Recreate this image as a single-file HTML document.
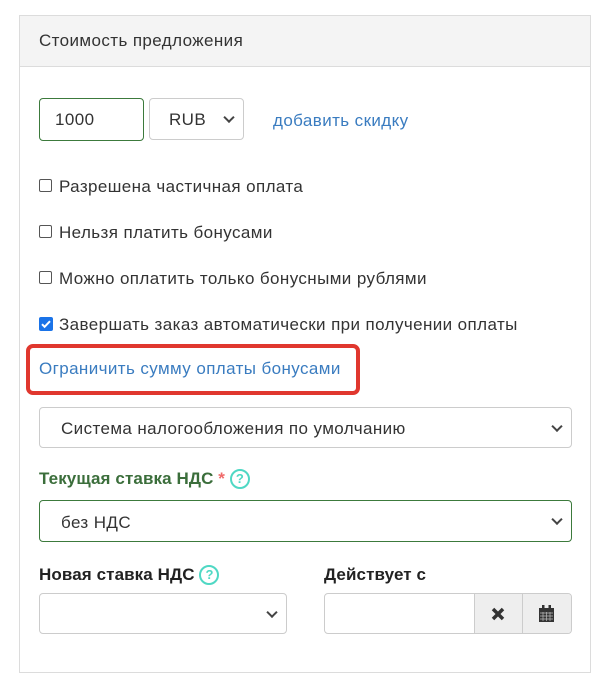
<!DOCTYPE html>
<html><head><meta charset="utf-8"><style>
*{box-sizing:border-box;margin:0;padding:0}
body{width:610px;height:687px;background:#fff;font-family:"Liberation Sans","DejaVu Sans",sans-serif;color:#333;position:relative;overflow:hidden}
.a{position:absolute}
.panel{left:19px;top:15px;width:572px;height:658px;border:1px solid #dcdcdc}
.head{left:20px;top:16px;width:570px;height:51px;background:#f4f4f4;border-bottom:1px solid #dcdcdc}
.t{font-size:17px;letter-spacing:0.4px;white-space:nowrap}
.b{font-size:17px;letter-spacing:0.1px;font-weight:bold}
.box{border:1px solid #ccc;border-radius:4px;background:#fff}
.chev{position:absolute;right:10px;top:50%;width:8px;height:8px;border-right:2px solid #444;border-bottom:2px solid #444;transform:translateY(-70%) rotate(45deg)}
.cb{width:13px;height:13px;border:1px solid #555;border-radius:2px;background:#fff}
.q{display:inline-block;width:20px;height:20px;border:2px solid #4fd8c4;border-radius:50%;color:#4fd8c4;font-size:13px;font-weight:bold;text-align:center;line-height:16px;vertical-align:1px;letter-spacing:0}
.link{color:#3a7cc0}
</style></head><body>
<div class="a panel"></div>
<div class="a head"></div>
<div class="a t" style="left:39px;top:31px">Стоимость предложения</div>

<div class="a box" style="left:39px;top:98px;width:105px;height:43px;border-color:#3c7a3c"></div>
<div class="a t" style="left:55px;top:110px">1000</div>
<div class="a box" style="left:149px;top:98px;width:95px;height:42px"><span class="a t" style="left:19px;top:11px">RUB</span><div class="chev"></div></div>
<div class="a t link" style="left:273px;top:111px">добавить скидку</div>

<div class="a cb" style="left:39px;top:179px"></div><div class="a t" style="left:59px;top:177px">Разрешена частичная оплата</div>
<div class="a cb" style="left:39px;top:225px"></div><div class="a t" style="left:59px;top:223px">Нельзя платить бонусами</div>
<div class="a cb" style="left:39px;top:271px"></div><div class="a t" style="left:59px;top:269px">Можно оплатить только бонусными рублями</div>
<div class="a" style="left:39px;top:317px;width:14px;height:14px;background:#1a73e8;border-radius:2px"><svg width="14" height="14" viewBox="0 0 14 14" style="position:absolute;left:0;top:0"><path d="M3 7.2l2.6 2.6L11 4.2" stroke="#fff" stroke-width="2" fill="none"/></svg></div>
<div class="a t" style="left:59px;top:315px">Завершать заказ автоматически при получении оплаты</div>

<div class="a" style="left:26px;top:344px;width:334px;height:51px;border:4px solid #e0372e;border-radius:7px"></div>
<div class="a t link" style="left:39px;top:359px">Ограничить сумму оплаты бонусами</div>

<div class="a box" style="left:39px;top:407px;width:533px;height:41px"><span class="a t" style="left:21px;top:11px">Система налогообложения по умолчанию</span><div class="chev"></div></div>

<div class="a b" style="left:39px;top:469px;color:#3b6e3b;white-space:nowrap">Текущая ставка НДС <span style="color:#f06a6a">*</span> <span class="q">?</span></div>
<div class="a box" style="left:39px;top:500px;width:533px;height:42px;border-color:#3c7a3c"><span class="a t" style="left:21px;top:12px">без НДС</span><div class="chev"></div></div>

<div class="a b" style="left:39px;top:565px;color:#222;white-space:nowrap">Новая ставка НДС <span class="q">?</span></div>
<div class="a box" style="left:39px;top:593px;width:248px;height:41px"><div class="chev"></div></div>

<div class="a b" style="left:324px;top:565px;color:#222;white-space:nowrap">Действует с</div>
<div class="a box" style="left:324px;top:593px;width:248px;height:41px;overflow:hidden">
<div class="a" style="left:149px;top:0;width:48px;height:41px;background:#eee;border-left:1px solid #ccc"></div>
<div class="a" style="left:197px;top:0;width:51px;height:41px;background:#eee;border-left:1px solid #ccc"></div>
<svg class="a" style="left:166px;top:13px" width="14" height="14" viewBox="0 0 14 14"><path d="M2 2L12 12M12 2L2 12" stroke="#333" stroke-width="3.5"/></svg>
<svg class="a" style="left:213px;top:11px" width="17" height="18" viewBox="0 0 17 18"><rect x="1" y="3" width="15" height="14" fill="#333"/><rect x="4" y="0" width="2.5" height="4" fill="#333"/><rect x="10.5" y="0" width="2.5" height="4" fill="#333"/><path d="M2 8h13M2 11h13M2 14h13M5 7v9M8.5 7v9M12 7v9" stroke="#bbb" stroke-width="0.7"/></svg>
</div>
</body></html>
